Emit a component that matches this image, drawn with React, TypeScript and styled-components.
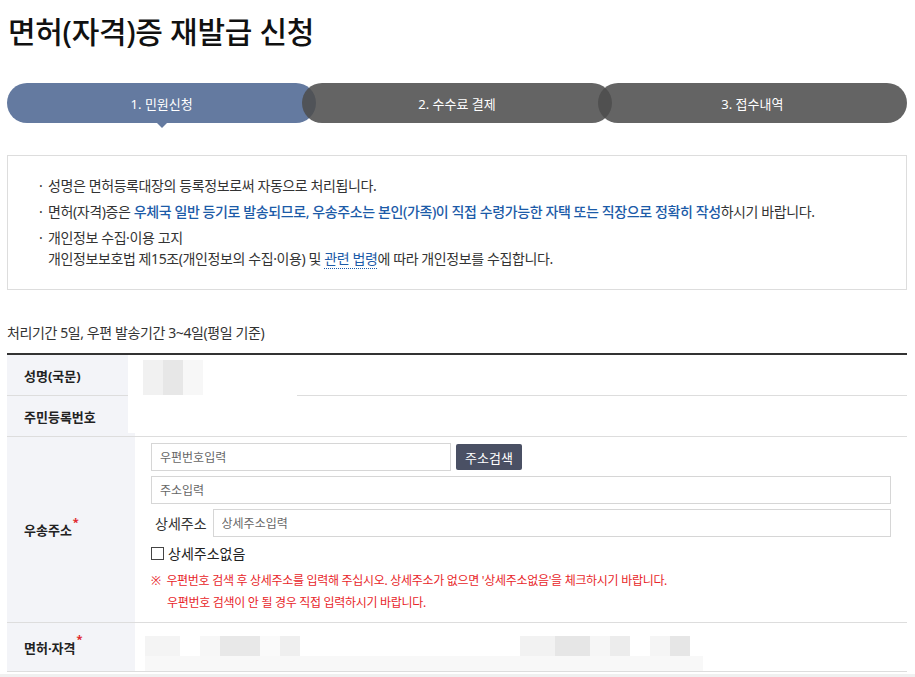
import styled, { createGlobalStyle } from "styled-components";

const GlobalStyle = createGlobalStyle`
  body {
    margin: 0;
    background: #fff;
    font-family: "Noto Sans", "Noto Sans CJK KR", sans-serif;
    color: #333;
  }
`;

const steps = ["1. 민원신청", "2. 수수료 결제", "3. 접수내역"];

export default function App() {
  return (
    <>
      <GlobalStyle />
      <Page>
        <Title>면허(자격)증 재발급 신청</Title>
        <StepList>
          {steps.map((s, i) => (
            <Step key={s} $active={i === 0}>
              {s}
            </Step>
          ))}
        </StepList>

        <Notice>
          <NoticeItem>
            <Bullet>·</Bullet>
            <span>성명은 면허등록대장의 등록정보로써 자동으로 처리됩니다.</span>
          </NoticeItem>
          <NoticeItem>
            <Bullet>·</Bullet>
            <span>
              면허(자격)증은{" "}
              <Strong>
                우체국 일반 등기로 발송되므로, 우송주소는 본인(가족)이 직접
                수령가능한 자택 또는 직장으로 정확히 작성
              </Strong>
              하시기 바랍니다.
            </span>
          </NoticeItem>
          <NoticeItem>
            <Bullet>·</Bullet>
            <span>
              개인정보 수집·이용 고지
              <br />
              개인정보보호법 제15조(개인정보의 수집·이용) 및{" "}
              <LawLink>관련 법령</LawLink>에 따라 개인정보를 수집합니다.
            </span>
          </NoticeItem>
        </Notice>

        <Caption>처리기간 5일, 우편 발송기간 3~4일(평일 기준)</Caption>

        <FormTable>
          <Redaction>
            <Pixel $w={20} $c="#f1f1f1" />
            <Pixel $w={20} $c="#e7e7e7" />
            <Pixel $w={20} $c="#f7f7f7" />
          </Redaction>
          <Row $h={40}>
            <Label>성명(국문)</Label>
            <Cell />
          </Row>
          <Row $h={40}>
            <Label>주민등록번호</Label>
            <Cell />
          </Row>
          <Row>
            <Label>
              <span>
                우송주소<Req>*</Req>
              </span>
            </Label>
            <AddressCell>
              <InputLine>
                <Input $w={300} placeholder="우편번호입력" />
                <SearchButton>주소검색</SearchButton>
              </InputLine>
              <InputLine>
                <Input placeholder="주소입력" />
              </InputLine>
              <InputLine>
                <DetailLabel>상세주소</DetailLabel>
                <Input placeholder="상세주소입력" />
              </InputLine>
              <CheckLine>
                <CheckBox />
                상세주소없음
              </CheckLine>
              <Warning>
                <WarnLine>
                  ※&nbsp; 우편번호 검색 후 상세주소를 입력해 주십시오. 상세주소가
                  없으면 '상세주소없음'을 체크하시기 바랍니다.
                </WarnLine>
                <WarnLine $indent>
                  우편번호 검색이 안 될 경우 직접 입력하시기 바랍니다.
                </WarnLine>
              </Warning>
            </AddressCell>
          </Row>
          <Row $h={48}>
            <Label>
              <span>
                면허·자격<Req>*</Req>
              </span>
            </Label>
            <LicenseCell>
              <BlurRow>
                <Pixel $w={35} $c="#f4f4f4" />
                <Pixel $w={20} $c="#fff" />
                <Pixel $w={20} $c="#f7f7f7" />
                <Pixel $w={40} $c="#e8e8e8" />
                <Pixel $w={20} $c="#fafafa" />
                <Pixel $w={20} $c="#efefef" />
                <Pixel $w={220} $c="#fff" />
                <Pixel $w={35} $c="#f2f2f2" />
                <Pixel $w={35} $c="#e6e6e6" />
                <Pixel $w={20} $c="#f6f6f6" />
                <Pixel $w={20} $c="#ececec" />
                <Pixel $w={20} $c="#fff" />
                <Pixel $w={20} $c="#f5f5f5" />
                <Pixel $w={20} $c="#e6e6e6" />
              </BlurRow>
              <BlurStrip />
            </LicenseCell>
          </Row>
        </FormTable>
      </Page>
      <BottomBar />
    </>
  );
}

const Page = styled.div`
  width: 900px;
  padding: 10px 8px 0 7px;
`;

const Title = styled.h1`
  margin: 0 0 29px 1px;
  font-size: 30px;
  line-height: 44px;
  font-weight: 500;
  letter-spacing: -0.3px;
  color: #111;
`;

const StepList = styled.ol`
  display: flex;
  margin: 0;
  padding: 0;
  list-style: none;
`;

const Step = styled.li<{ $active: boolean }>`
  position: relative;
  flex: 1;
  height: 40px;
  border-radius: 20px;
  display: flex;
  align-items: center;
  justify-content: center;
  font-size: 13px;
  color: #fff;
  background: ${(p) => (p.$active ? "#647aa0" : "rgba(77, 77, 77, 0.87)")};
  & + & {
    margin-left: -14px;
  }
  ${(p) =>
    p.$active &&
    `
    &::after {
      content: "";
      position: absolute;
      left: 50%;
      bottom: -5px;
      margin-left: -5px;
      border-left: 5px solid transparent;
      border-right: 5px solid transparent;
      border-top: 5px solid #647aa0;
    }
  `}
`;

const Notice = styled.ul`
  margin: 32px 0 0;
  padding: 19px 20px 20px 31px;
  list-style: none;
  border: 1px solid #ddd;
  font-size: 14px;
  line-height: 21px;
  letter-spacing: -0.4px;
  color: #333;
`;

const NoticeItem = styled.li`
  display: flex;
  & + & {
    margin-top: 5px;
  }
`;

const Bullet = styled.span`
  width: 9px;
  flex-shrink: 0;
`;

const Strong = styled.span`
  color: #1c5ba8;
  font-weight: 500;
`;

const LawLink = styled.span`
  color: #1c5ba8;
  border-bottom: 1px dotted #1c5ba8;
`;

const Caption = styled.p`
  margin: 33px 0 10px;
  font-size: 14px;
  line-height: 20px;
  letter-spacing: -0.4px;
  color: #333;
`;

const FormTable = styled.div`
  position: relative;
  border-top: 2px solid #333;
`;

const Redaction = styled.div`
  position: absolute;
  left: 121px;
  top: 0;
  width: 169px;
  height: 78px;
  background: #fff;
  display: flex;
  padding: 5px 0 0 15px;
  box-sizing: border-box;
  z-index: 1;
  & > * {
    height: 35px;
  }
`;

const Row = styled.div<{ $h?: number }>`
  display: flex;
  min-height: ${(p) => (p.$h ? `${p.$h}px` : "auto")};
  border-bottom: 1px solid #ddd;
`;

const Label = styled.div`
  width: 128px;
  flex-shrink: 0;
  box-sizing: border-box;
  padding-left: 17px;
  background: #f3f4f8;
  display: flex;
  align-items: center;
  font-size: 13px;
  font-weight: 700;
  color: #222;
`;

const Req = styled.sup`
  position: relative;
  top: -4px;
  margin-left: 1px;
  color: #e0262b;
  font-size: 11px;
  line-height: 0;
`;

const Cell = styled.div`
  flex: 1;
`;

const AddressCell = styled.div`
  flex: 1;
  padding: 6px 16px 8px 16px;
  display: flex;
  flex-direction: column;
  gap: 5px;
`;

const InputLine = styled.div`
  display: flex;
  align-items: center;
  gap: 5px;
  width: 740px;
`;

const Input = styled.input<{ $w?: number }>`
  ${(p) => (p.$w ? `width: ${p.$w}px;` : "flex: 1;")}
  height: 28px;
  box-sizing: border-box;
  border: 1px solid #d6d6d6;
  padding: 0 8px;
  font-family: inherit;
  font-size: 12px;
  color: #333;
  &::placeholder {
    color: #666;
  }
`;

const SearchButton = styled.button`
  height: 26px;
  padding: 0 9px;
  border: 0;
  border-radius: 2px;
  background: #4a5064;
  color: #fff;
  font-family: inherit;
  font-size: 13px;
`;

const DetailLabel = styled.span`
  font-size: 14px;
  padding: 0 1px 0 4px;
  color: #333;
`;

const CheckLine = styled.label`
  display: flex;
  align-items: center;
  gap: 4px;
  height: 22px;
  font-size: 14px;
  color: #222;
`;

const CheckBox = styled.span`
  width: 11px;
  height: 11px;
  border: 1px solid #444;
  background: #fff;
`;

const Warning = styled.div`
  margin-top: 1px;
  font-size: 12px;
  line-height: 22px;
  letter-spacing: -0.3px;
  color: #e8262a;
`;

const WarnLine = styled.div<{ $indent?: boolean }>`
  padding-left: ${(p) => (p.$indent ? "16px" : "0")};
`;

const LicenseCell = styled.div`
  flex: 1;
  padding: 13px 0 0 10px;
  display: flex;
  flex-direction: column;
`;

const BlurRow = styled.div`
  display: flex;
  height: 20px;
`;

const Pixel = styled.div<{ $w: number; $c: string }>`
  width: ${(p) => p.$w}px;
  background: ${(p) => p.$c};
  flex-shrink: 0;
`;

const BlurStrip = styled.div`
  width: 558px;
  flex: 1;
  background: #f8f8f8;
`;

const BottomBar = styled.div`
  height: 10px;
  margin-top: 2px;
  background: #f0f0f0;
`;
